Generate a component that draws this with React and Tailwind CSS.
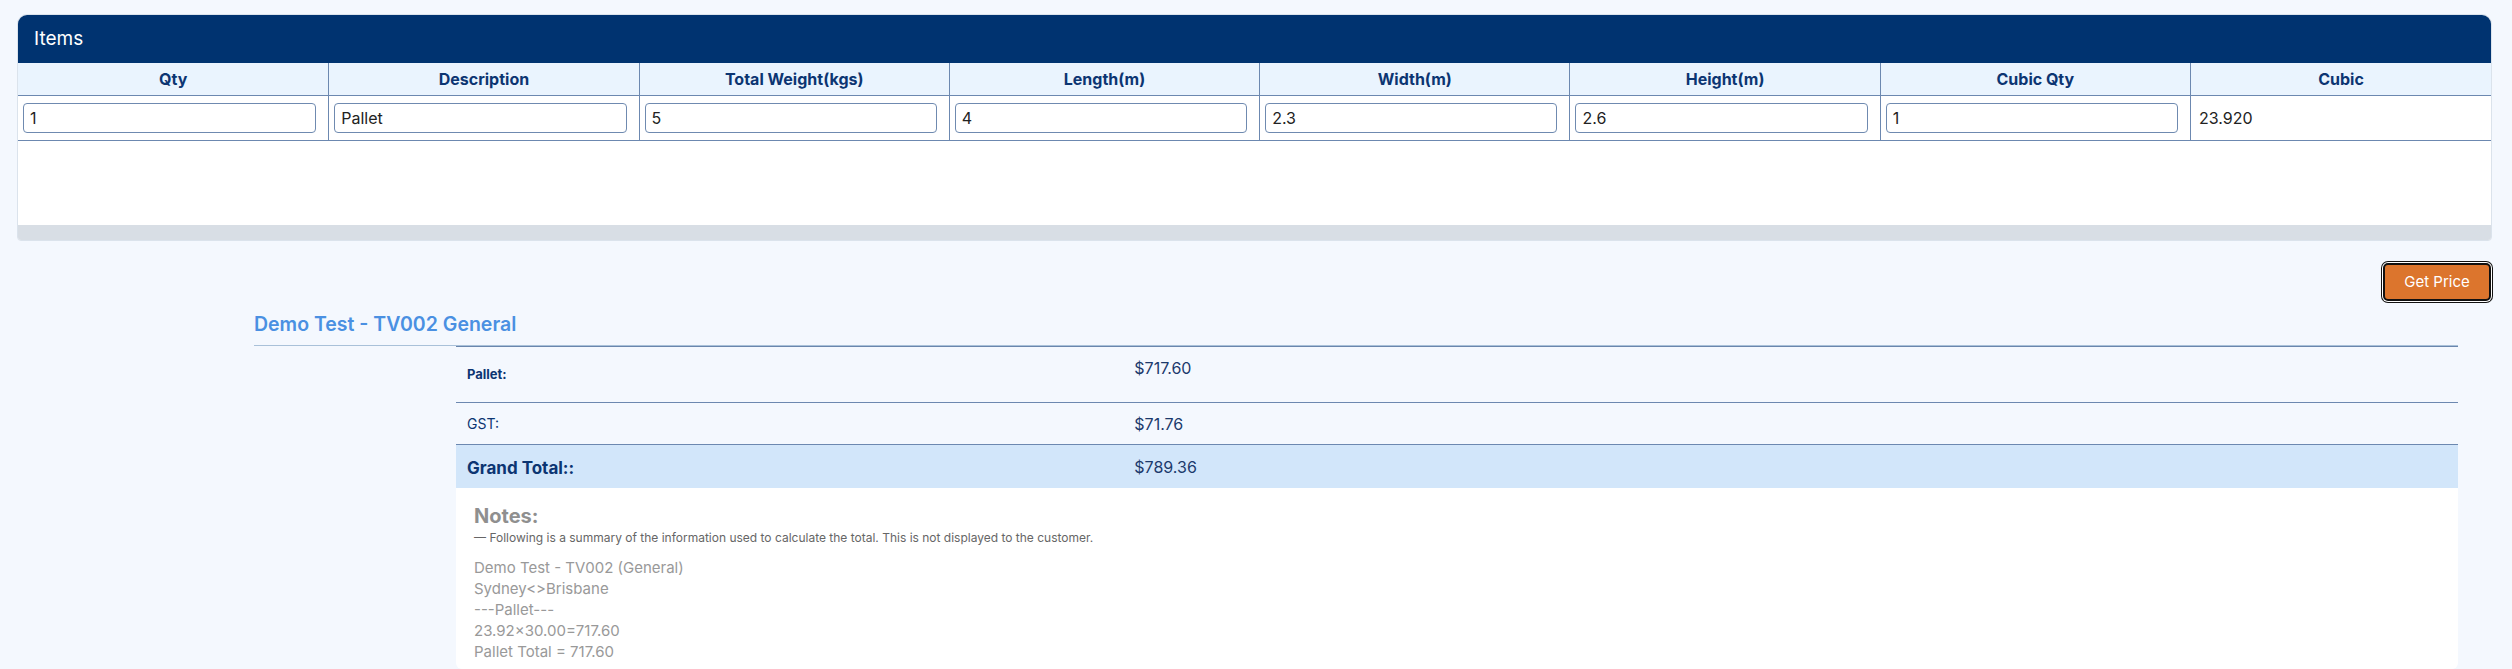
import React from 'react';

const columns = [
  { label: 'Qty', value: '1' },
  { label: 'Description', value: 'Pallet' },
  { label: 'Total Weight(kgs)', value: '5' },
  { label: 'Length(m)', value: '4' },
  { label: 'Width(m)', value: '2.3' },
  { label: 'Height(m)', value: '2.6' },
  { label: 'Cubic Qty', value: '1' },
];

const noteLines = [
  'Demo Test - TV002 (General)',
  'Sydney<>Brisbane',
  '---Pallet---',
  '23.92×30.00=717.60',
  'Pallet Total = 717.60',
];

const App = () => {
  return (
    <div className="min-h-screen bg-[#f4f8fe] pt-[14px] font-['Inter',sans-serif]">
      {/* Items card */}
      <div className="ml-[17px] mr-[20px] rounded-t-[10px] rounded-b-[4px] border border-[#dbe3ec] bg-white overflow-hidden">
        <div className="h-[48px] bg-[#003370] px-4 flex items-center text-white text-[19px]">
          Items
        </div>

        {/* Header row */}
        <div className="grid grid-cols-[repeat(7,minmax(0,1fr))_minmax(0,0.97fr)] h-[33px] bg-[#eaf4fe] border-b border-[#6c88b0]">
          {columns.map((col, i) => (
            <div
              key={col.label}
              className={`flex items-center justify-center text-[16px] font-bold text-[#0c3572] ${i > 0 ? 'border-l border-[#6c88b0]' : ''}`}
            >
              {col.label}
            </div>
          ))}
          <div className="flex items-center justify-center border-l border-[#6c88b0] text-[16px] font-bold text-[#0c3572]">
            Cubic
          </div>
        </div>

        {/* Input row */}
        <div className="grid grid-cols-[repeat(7,minmax(0,1fr))_minmax(0,0.97fr)] h-[45px] border-b border-[#6c88b0]">
          {columns.map((col, i) => (
            <div
              key={col.label}
              className={`flex items-center pl-[5px] pr-[12px] ${i > 0 ? 'border-l border-[#6c88b0]' : ''}`}
            >
              <input
                defaultValue={col.value}
                className="w-full h-[30px] rounded-[4px] border border-[#6f8ab0] bg-white px-[6px] text-[16px] text-[#222] outline-none"
              />
            </div>
          ))}
          <div className="flex items-center border-l border-[#6c88b0] pl-[8px] text-[16px] text-[#222]">
            23.920
          </div>
        </div>

        <div className="h-[84px] bg-white"></div>
        {/* horizontal scroll track */}
        <div className="h-[15px] bg-[#d8dee5]"></div>
      </div>

      {/* Action */}
      <div className="flex justify-end mt-[22px] mr-[21px]">
        <button className="h-[38px] w-[108px] rounded-[5px] border-2 border-[#111] bg-[#dc752d] text-white text-[15px] ring-1 ring-[#111] ring-offset-1 ring-offset-white">
          Get Price
        </button>
      </div>

      {/* Quote result */}
      <div className="ml-[254px] mr-[54px] mt-[10px]">
        <h3 className="pb-[8px] text-[19.5px] leading-[26px] font-semibold text-[#4a90e2] border-b border-[#a9c1d9]">
          Demo Test - TV002 General
        </h3>

        <div className="ml-[202px] border-t border-[#6a86ad]">
          <div className="grid grid-cols-[1fr_2fr] h-[56px] border-b border-[#6c88b0]">
            <div className="pl-[11px] pt-[18px] text-[13px] leading-[18px] font-bold text-[#0c3572]">Pallet:</div>
            <div className="pl-[11px] pt-[10px] text-[16px] leading-[22px] text-[#1c3a6c]">$717.60</div>
          </div>
          <div className="grid grid-cols-[1fr_2fr] h-[42px] border-b border-[#6c88b0]">
            <div className="pl-[11px] pt-[12px] text-[14px] leading-[18px] text-[#0c3572]">GST:</div>
            <div className="pl-[11px] pt-[10px] text-[16px] leading-[22px] text-[#1c3a6c]">$71.76</div>
          </div>
          <div className="grid grid-cols-[1fr_2fr] h-[43px] bg-[#d2e6fa]">
            <div className="pl-[11px] pt-[11px] text-[17px] leading-[24px] font-bold text-[#0c3572]">Grand Total::</div>
            <div className="pl-[11px] pt-[11px] text-[16px] leading-[22px] text-[#1c3a6c]">$789.36</div>
          </div>

          {/* Internal notes */}
          <div className="bg-white rounded-b-[6px] px-[18px] pt-[14px] pb-[7px]">
            <div className="text-[20px] leading-[28px] font-bold text-[#8f8f8f]">Notes:</div>
            <div className="text-[12px] leading-[16px] text-[#666]">
              — Following is a summary of the information used to calculate the total. This is not displayed to the customer.
            </div>
            <div className="mt-[11px] text-[15px] leading-[21px] text-[#999999]">
              {noteLines.map((line) => (
                <div key={line}>{line}</div>
              ))}
            </div>
          </div>
        </div>
      </div>
    </div>
  );
};

export default App;
